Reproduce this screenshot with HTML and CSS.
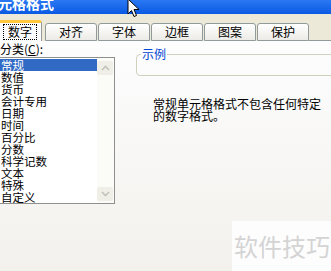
FILE: index.html
```html
<!DOCTYPE html>
<html lang="zh-CN">
<head>
  <meta charset="UTF-8">
  <title>单元格格式</title>
  <link rel="stylesheet" href="styles.css">
</head>
<body>
  <div class="dialog">
    <div class="titlebar"><span class="title">单元格格式</span></div>

    <div class="tabstrip">
      <div class="tab active"><span class="focus">数字</span></div>
      <div class="tab">对齐</div>
      <div class="tab">字体</div>
      <div class="tab">边框</div>
      <div class="tab">图案</div>
      <div class="tab">保护</div>
      <div class="tab-rest"></div>
    </div>

    <div class="panel">
      <div class="category">
        <div class="label">分类(<u>C</u>):</div>
        <div class="listbox">
          <ul class="items">
            <li class="selected">常规</li>
            <li>数值</li>
            <li>货币</li>
            <li>会计专用</li>
            <li>日期</li>
            <li>时间</li>
            <li>百分比</li>
            <li>分数</li>
            <li>科学记数</li>
            <li>文本</li>
            <li>特殊</li>
            <li>自定义</li>
          </ul>
          <div class="scrollbar">
            <div class="sb-btn">
              <svg width="9" height="6" viewBox="0 0 9 6"><path d="M1 5 L4.5 1.5 L8 5" fill="none" stroke="#c4c3bb" stroke-width="1.6"/></svg>
            </div>
            <div class="sb-track"></div>
            <div class="sb-btn">
              <svg width="9" height="6" viewBox="0 0 9 6"><path d="M1 1 L4.5 4.5 L8 1" fill="none" stroke="#c4c3bb" stroke-width="1.6"/></svg>
            </div>
          </div>
        </div>
      </div>

      <div class="details">
        <fieldset class="sample">
          <legend>示例</legend>
        </fieldset>
        <p class="desc">常规单元格格式不包含任何特定<br>的数字格式。</p>
      </div>
    </div>

    <div class="watermark">软件技巧</div>

    <svg class="cursor" width="13" height="20" viewBox="0 0 13 20">
      <path d="M1 1 L1 16 L4.5 12.5 L7 18.5 L9.5 17.5 L7 11.5 L12 11.5 Z" fill="#fff" stroke="#000" stroke-width="1"/>
    </svg>
  </div>
</body>
</html>
```

FILE: styles.css
```css
body {
  margin: 0;
  font-family: "Noto Sans CJK SC", "Noto Sans", sans-serif;
  font-size: 12px;
  color: #000;
}

.dialog {
  position: relative;
  width: 331px;
  height: 271px;
  overflow: hidden;
  background-color: #ece9d8;
}

.titlebar {
  height: 14px;
  overflow: hidden;
  background: linear-gradient(#2a78f2, #0a5ae3);
}

.title {
  display: block;
  margin: -6px 0 0 -16px;
  font-size: 14px;
  font-weight: bold;
  line-height: 18px;
  color: #fff;
}

.tabstrip {
  display: flex;
  align-items: flex-end;
  height: 27px;
}

.tab {
  box-sizing: border-box;
  width: 52px;
  height: 18px;
  margin-left: 1px;
  border: 1px solid #919b9c;
  border-radius: 3px 3px 0 0;
  background: linear-gradient(#ffffff, #ecebe6);
  line-height: 16px;
  text-align: center;
}

.tab.active {
  width: 44px;
  height: 21px;
  margin-left: -2px;
  margin-right: 2px;
  border-top: 3px solid #ffc83c;
  border-bottom: none;
  background: #fcfcfe;
  padding-top: 1px;
  line-height: 14px;
}

.focus {
  display: inline-block;
  padding: 0 4px;
  border: 1px dotted #000;
}

.tab-rest {
  flex: 1;
  border-bottom: 1px solid #919b9c;
}

.panel {
  display: flex;
  height: 230px;
  background: linear-gradient(#fdfdfe, #f2f1ec);
}

.category {
  width: 115px;
}

.label {
  height: 16px;
  line-height: 16px;
}

.label u {
  text-decoration: underline;
}

.listbox {
  display: flex;
  box-sizing: border-box;
  height: 147px;
  border: 1px solid #8f8f8f;
  border-left: none;
  background: #fff;
}

.items {
  flex: 1;
  margin: 0;
  padding: 1px 0 0;
  list-style: none;
}

.items li {
  height: 12px;
  padding-left: 1px;
  font-size: 11.5px;
  line-height: 12px;
}

.items li.selected {
  background-color: #316ac5;
  color: #fff;
}

.scrollbar {
  display: flex;
  flex-direction: column;
  width: 16px;
  padding-right: 1px;
  background: #fbfbf7;
}

.sb-btn {
  display: flex;
  align-items: center;
  justify-content: center;
  height: 14px;
  margin-top: 3px;
  border-radius: 2px;
  background: #efeee7;
}

.sb-track {
  flex: 1;
}

.scrollbar .sb-btn:last-child {
  margin: 0 0 2px;
}

.details {
  flex: 1;
  padding-left: 21px;
}

.sample {
  height: 28px;
  margin: 7px -20px 0 0;
  padding: 0;
  box-sizing: border-box;
  border: 1px solid #d0d0bf;
  border-radius: 4px;
}

.sample legend {
  margin-left: 4px;
  padding: 0 1px;
  line-height: 12px;
  color: #0046d5;
}

.desc {
  margin: 22px 0 0 17px;
  line-height: 12px;
  white-space: nowrap;
}

.watermark {
  position: absolute;
  left: 232px;
  top: 221px;
  width: 110px;
  height: 50px;
  padding: 10px 0 0 2px;
  box-sizing: border-box;
  background: #fdfdfd;
  font-size: 24px;
  line-height: 30px;
  color: #d4d4d4;
}

.cursor {
  position: absolute;
  left: 127px;
  top: -2px;
}
```
